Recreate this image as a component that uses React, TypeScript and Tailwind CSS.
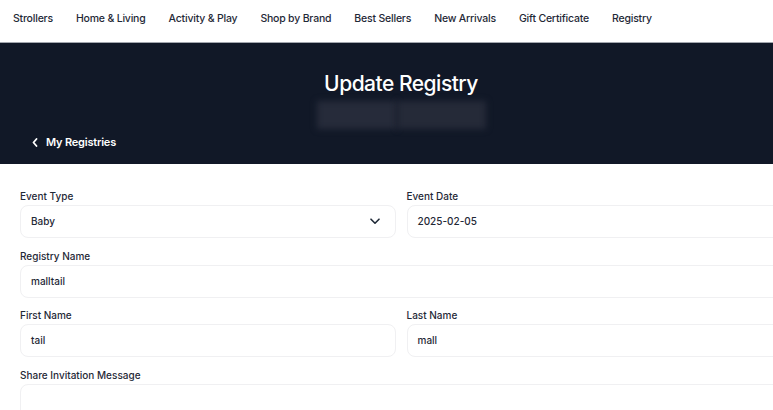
import React from "react";

const navItems = [
  "Strollers",
  "Home & Living",
  "Activity & Play",
  "Shop by Brand",
  "Best Sellers",
  "New Arrivals",
  "Gift Certificate",
  "Registry",
];

function Field({ label, value, children }: { label: string; value?: string; children?: React.ReactNode }) {
  return (
    <div className="flex flex-col">
      <label className="text-[10px] leading-[13px] font-medium text-[#1f2937] mb-[2px]">{label}</label>
      <div className="h-[33px] rounded-[8px] border border-[#f0f0f2] bg-white flex items-center px-[10px] text-[10px] text-[#1f2937] font-medium">
        <span className="flex-1">{value}</span>
        {children}
      </div>
    </div>
  );
}

export default function App() {
  return (
    <div className="w-[773px] h-[410px] overflow-hidden bg-white" style={{ fontFamily: "Inter, 'Open Sans', sans-serif" }}>
      <div className="w-[802px]">
        <nav className="h-[42px] flex items-start pt-[12px] gap-[23px] px-[13px] bg-white">
          {navItems.map((n) => (
            <span key={n} className="text-[10.5px] leading-[14px] font-medium text-[#1f2937] tracking-[-0.2px] whitespace-nowrap">
              {n}
            </span>
          ))}
        </nav>
        <div className="h-[1px] bg-[#a3a7ae]" />
        <header className="h-[121px] bg-[#111827] flex flex-col">
          <div className="flex flex-col items-center pt-[28px]">
            <h1 className="text-[21px] leading-[26px] font-medium text-white tracking-[-0.5px]">Update Registry</h1>
            <div className="mt-[4px] w-[169px] h-[28px] flex">
              <div className="w-[80px] h-full bg-[#262b3a] blur-[3px]" />
              <div className="flex-1 h-full bg-[#252a38] blur-[3px]" />
            </div>
          </div>
          <div className="flex items-center gap-[8px] pl-[32px] mt-[5px]">
            <svg width="6" height="9" viewBox="0 0 6 9" fill="none">
              <path d="M4.5 1L1.5 4.5L4.5 8" stroke="white" strokeWidth="1.8" strokeLinecap="round" strokeLinejoin="round" />
            </svg>
            <span className="text-[11px] font-semibold text-white tracking-[-0.2px]">My Registries</span>
          </div>
        </header>
        <div className="px-[20px] pt-[26px] flex flex-col gap-[11.6px]">
          <div className="grid grid-cols-2 gap-x-[11px]">
            <Field label="Event Type" value="Baby">
              <svg width="10" height="7" viewBox="0 0 10 7" fill="none" className="mr-[5px]">
                <path d="M1 1.2L5 5.2L9 1.2" stroke="#1f2937" strokeWidth="1.6" strokeLinecap="round" strokeLinejoin="round" />
              </svg>
            </Field>
            <Field label="Event Date" value="2025-02-05" />
          </div>
          <Field label="Registry Name" value="malltail" />
          <div className="grid grid-cols-2 gap-x-[11px]">
            <Field label="First Name" value="tail" />
            <Field label="Last Name" value="mall" />
          </div>
          <div className="flex flex-col">
            <label className="text-[10px] leading-[13px] font-medium text-[#1f2937] mb-[2px]">Share Invitation Message</label>
            <div className="h-[80px] rounded-[8px] border border-[#f0f0f2] bg-white" />
          </div>
        </div>
      </div>
    </div>
  );
}
